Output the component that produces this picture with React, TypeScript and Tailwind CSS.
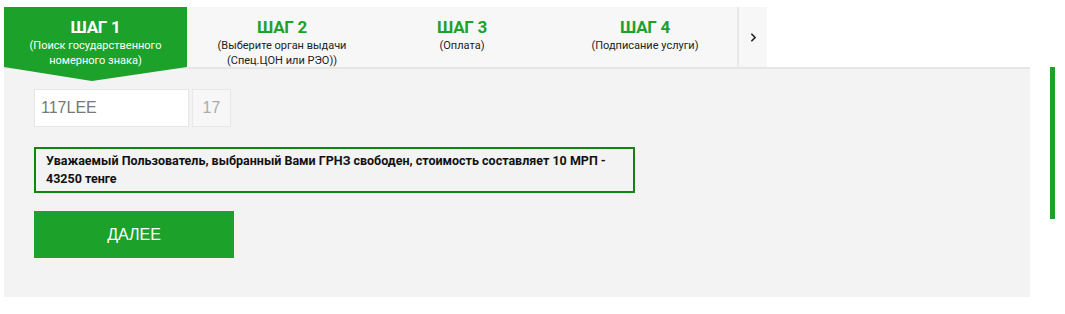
import { ChevronRight } from "lucide-react";

// Step wizard: plate-number lookup, step 1 of 4.

const steps = [
  { title: "ШАГ 2", sub: ["(Выберите орган выдачи", "(Спец.ЦОН или РЭО))"], w: "w-[190px]" },
  { title: "ШАГ 3", sub: ["(Оплата)"], w: "w-[170px]" },
  { title: "ШАГ 4", sub: ["(Подписание услуги)"], w: "w-[190px] pl-[6px]" },
];

export default function App() {
  return (
    <div className="h-[314px] w-full bg-white font-['Roboto',sans-serif]">
      <div className="flex pl-[4px] pt-[7px]">
        <div className="w-[1026px]">
          {/* tabs */}
          <div className="flex h-[60px]">
            <div className="relative w-[183px] bg-[#1ca12b] pt-[9px] text-center text-white">
              <div className="text-[17px] font-bold leading-[22px] tracking-[-0.3px]">ШАГ 1</div>
              <div className="text-[11px] leading-[15px]">
                (Поиск государственного
                <br />
                номерного знака)
              </div>
              <div className="absolute left-0 top-[60px] z-10 h-[14px] w-[183px] bg-[#1ca12b] [clip-path:polygon(0_0,48%_100%,100%_0)]" />
            </div>
            {steps.map((s) => (
              <div key={s.title} className={`${s.w} bg-[#f7f7f7] pt-[9px] text-center`}>
                <div className="text-[17px] font-bold leading-[22px] tracking-[-0.3px] text-[#1ca12b]">{s.title}</div>
                <div className="text-[11px] leading-[15px] text-[#222]">
                  {s.sub.map((l, i) => (
                    <div key={i}>{l}</div>
                  ))}
                </div>
              </div>
            ))}
            <div className="flex w-[30px] items-center justify-center border-l-2 border-[#e8e8e8] bg-[#f7f7f7]">
              <ChevronRight size={13} strokeWidth={3.2} className="text-[#222]" />
            </div>
          </div>

          {/* panel */}
          <div className="h-[230px] border-t-2 border-[#e6e6e6] bg-[#f3f3f3] pl-[30px] pt-[20px]">
            <div className="flex gap-[3px]">
              <div className="flex h-[38px] w-[155px] items-center border border-[#e6e6e6] bg-white pl-[6px] font-['Liberation_Sans',sans-serif] text-[16px] text-[#777]">
                117LEE
              </div>
              <div className="flex h-[38px] w-[39px] items-center justify-center border border-[#e8e8e8] bg-[#f7f7f7] font-['Liberation_Sans',sans-serif] text-[16px] text-[#aaa]">
                17
              </div>
            </div>
            <div className="mt-[20px] h-[46px] w-[601px] border-2 border-[#0f860f] pl-[10px] pt-[3px] text-[12.5px] font-bold leading-[18px] text-[#111]">
              Уважаемый Пользователь, выбранный Вами ГРНЗ свободен, стоимость составляет 10 МРП -
              <br />
              43250 тенге
            </div>
            <button
              type="button"
              className="mt-[18px] h-[47px] w-[200px] bg-[#1ca12b] font-['Liberation_Sans',sans-serif] text-[16px] text-white"
            >
              ДАЛЕЕ
            </button>
          </div>
        </div>
        <div className="ml-[20px] mt-[60px] h-[152px] w-[5px] bg-[#1ca12b]" />
      </div>
    </div>
  );
}
